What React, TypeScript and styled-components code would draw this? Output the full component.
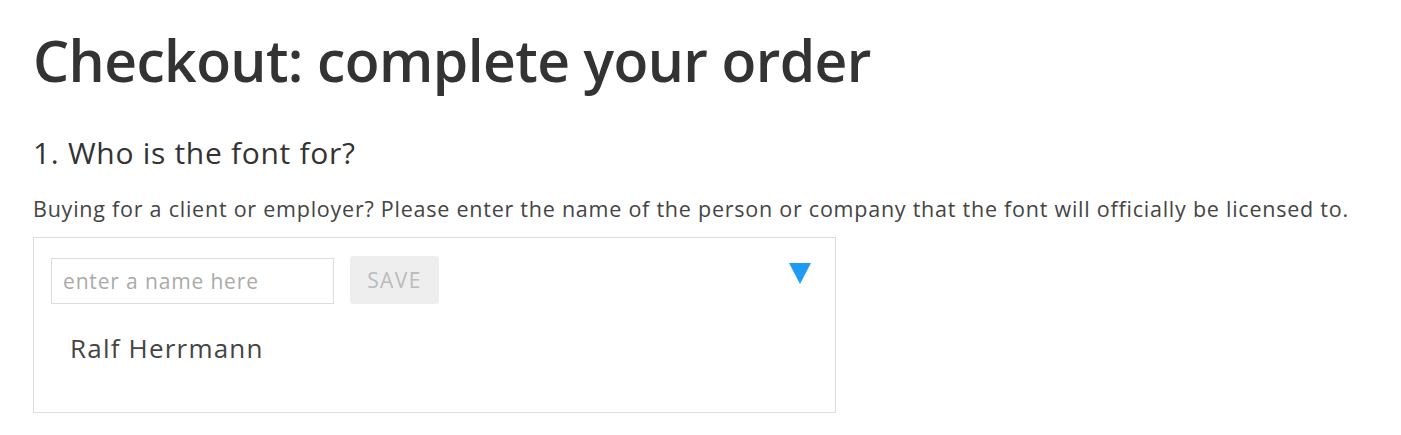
import React, { useState } from "react";
import styled, { createGlobalStyle } from "styled-components";

const Global = createGlobalStyle`
  html, body {
    margin: 0;
    padding: 0;
    background: #fff;
  }
  body {
    font-family: "Open Sans", "Noto Sans", sans-serif;
    color: #333;
  }
`;

const Page = styled.main`
  padding: 20px 0 0 33px;
`;

const Title = styled.h1`
  margin: 0;
  font-size: 57px;
  font-weight: 600;
  line-height: 80px;
  color: #333;
  letter-spacing: -0.6px;
`;

const Step = styled.h2`
  margin: 33px 0 0;
  font-size: 30px;
  font-weight: 400;
  line-height: 40px;
  color: #333;
  letter-spacing: 0.7px;
`;

const Hint = styled.p`
  margin: 21px 0 0;
  font-size: 21.5px;
  line-height: 30px;
  color: #444;
  letter-spacing: 0.76px;
  white-space: nowrap;
`;

const Panel = styled.section`
  box-sizing: border-box;
  width: 803px;
  height: 176px;
  margin-top: 13px;
  border: 1px solid #ddd;
  padding: 20px 17px 19px;
  display: flex;
  flex-direction: column;
`;

const Row = styled.div`
  display: flex;
  align-items: center;
  gap: 16px;
`;

const NameInput = styled.input`
  box-sizing: border-box;
  width: 283px;
  height: 46px;
  border: 1px solid #ddd;
  padding: 0 11px;
  font-family: inherit;
  font-size: 21px;
  letter-spacing: 0.85px;
  color: #333;
  outline: none;
  &::placeholder {
    color: #aaa;
  }
`;

const SaveButton = styled.button<{ $active: boolean }>`
  box-sizing: border-box;
  width: 89px;
  height: 48px;
  border: none;
  border-radius: 3px;
  background: ${(p) => (p.$active ? "#1e9bf7" : "#eee")};
  color: ${(p) => (p.$active ? "#fff" : "#bbb")};
  font-family: inherit;
  font-size: 21px;
  letter-spacing: 1.4px;
  padding: 0;
  margin-top: -2px;
`;

const Toggle = styled.span`
  margin-left: auto;
  margin-right: 7px;
  align-self: flex-start;
  margin-top: 5px;
  width: 0;
  height: 0;
  border-left: 11px solid transparent;
  border-right: 11px solid transparent;
  border-top: 21px solid #1e9bf7;
`;

const Licensee = styled.div`
  margin: 29px 0 0 19px;
  font-size: 26px;
  line-height: 30px;
  color: #444;
  letter-spacing: 1.2px;
`;

export default function App() {
  const [name, setName] = useState("");
  return (
    <>
      <Global />
      <Page>
        <Title>Checkout: complete your order</Title>
        <Step>1. Who is the font for?</Step>
        <Hint>
          Buying for a client or employer? Please enter the name of the person or company that the
          font will officially be licensed to.
        </Hint>
        <Panel>
          <Row>
            <NameInput
              placeholder="enter a name here"
              value={name}
              onChange={(e) => setName(e.target.value)}
            />
            <SaveButton $active={name.length > 0}>SAVE</SaveButton>
            <Toggle />
          </Row>
          <Licensee>Ralf Herrmann</Licensee>
        </Panel>
      </Page>
    </>
  );
}
